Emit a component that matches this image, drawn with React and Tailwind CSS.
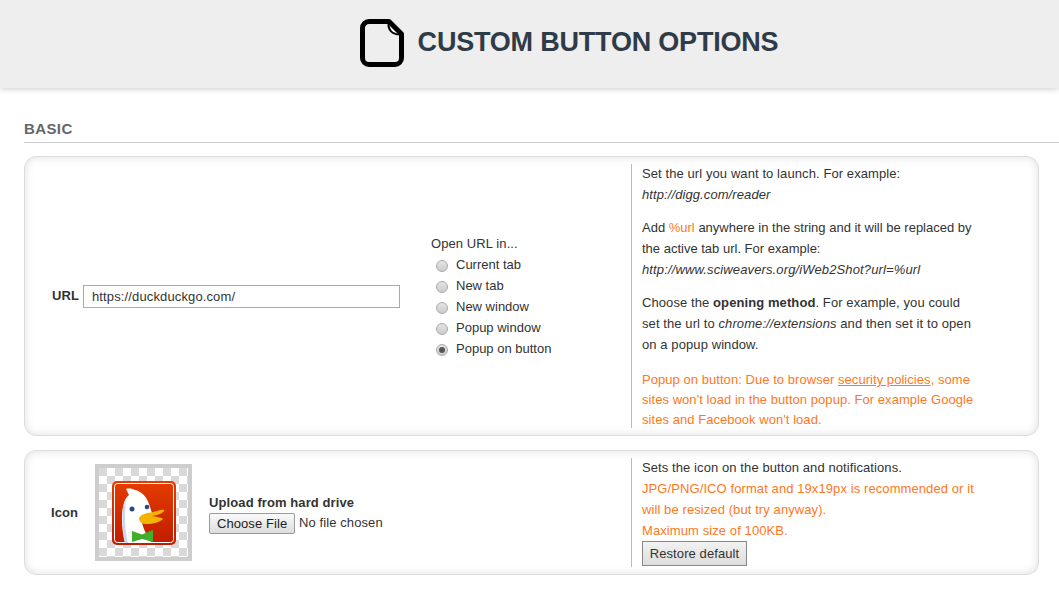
const openOptions = [
  { label: "Current tab" },
  { label: "New tab" },
  { label: "New window" },
  { label: "Popup window" },
  { label: "Popup on button", checked: true },
]

function PageIcon() {
  return (
    <svg width="44" height="48" viewBox="0 0 44 48" fill="none" className="shrink-0">
      <path d="M29 4L40 15C34 15 29 11 29 4Z" fill="#fff" />
      <path
        d="M9 2.5H29L41.5 15V39A6.5 6.5 0 0 1 35 45.5H9A6.5 6.5 0 0 1 2.5 39V9A6.5 6.5 0 0 1 9 2.5Z"
        stroke="#000"
        strokeWidth="5"
        strokeLinejoin="round"
      />
      <path d="M28.5 4C28 11 32 15.5 40 15.5" stroke="#000" strokeWidth="2" />
    </svg>
  )
}

function DuckIcon() {
  return (
    <svg width="97" height="97" viewBox="0 0 97 97" className="shrink-0">
      <defs>
        <pattern id="check" width="16" height="16" patternUnits="userSpaceOnUse" x="4" y="4">
          <rect width="16" height="16" fill="#fff" />
          <rect width="8" height="8" fill="#d9d9d9" />
          <rect x="8" y="8" width="8" height="8" fill="#d9d9d9" />
        </pattern>
        <linearGradient id="red" x1="0" y1="0" x2="0" y2="1">
          <stop offset="0" stopColor="#e63c00" />
          <stop offset="1" stopColor="#c01c00" />
        </linearGradient>
      </defs>
      <rect width="97" height="97" fill="#cdcdcd" />
      <rect x="4" y="4" width="89" height="89" fill="url(#check)" />
      <rect x="17" y="17" width="64" height="64" rx="5" fill="url(#red)" />
      <rect x="19.5" y="19.5" width="59" height="59" rx="3" fill="none" stroke="#fff" strokeWidth="1" />
      <path
        d="M30 79C27 68 26 52 28 43C29 37 31 33 34 31L31 25C35 24 38 25 40 26C46 27 52 33 54 40L57 49L47 58C48 64 52 73 57 79Z"
        fill="#fff"
      />
      <path d="M28 43C27 55 28 68 30 79H33C30 68 29 52 31 36Z" fill="#c9d8ef" />
      <path
        d="M44 54C46 50 52 49 58 48C63 47 67 45 69 46C70 48 64 51 57 52C61 53 66 53 68 55C65 58 58 60 52 60C47 60 44 58 44 54Z"
        fill="#f2b400"
      />
      <circle cx="37" cy="45" r="2.5" fill="#2a4a80" />
      <circle cx="52" cy="43" r="2.3" fill="#2a4a80" />
      <path d="M37 67L47 70.5L58 66V78L47 75L37 78Z" fill="#3fae2a" />
    </svg>
  )
}

export default function App() {
  return (
    <div className="min-h-[592px] bg-white font-['Liberation_Sans',Arial,sans-serif] text-[13px] tracking-[0.09px] text-[#333]">
      <header className="flex h-[88px] items-center justify-center gap-[14px] bg-[#eeeeee] pb-[3px] pl-[79px] shadow-[0_1px_6px_rgba(0,0,0,0.2)]">
        <PageIcon />
        <h1 className="text-[27px] font-bold tracking-[-0.2px] text-[#2f3b47]">CUSTOM BUTTON OPTIONS</h1>
      </header>

      <section className="pl-6 pt-[31px]">
        <h2 className="border-b border-[#cccccc] pb-[4px] text-[15px] leading-[19px] font-bold tracking-[0.4px] text-[#666666]">BASIC</h2>

        <div className="mr-5 mt-[13px] flex h-[280px] rounded-xl border border-[#dddddd] py-[7px] shadow-[inset_0_0_10px_rgba(0,0,0,0.13)]">
          <div className="flex w-[607px] items-center border-r border-[#bbbbbb]">
            <label className="ml-[27px] mr-[4px] font-bold">URL</label>
            <input
              readOnly
              value="https://duckduckgo.com/"
              className="mt-px h-[23px] w-[317px] border border-[#aaaaaa] px-2 text-[13px] tracking-[0.13px] text-[#333] outline-none"
            />
            <div className="ml-[31px] flex flex-col">
              <div className="leading-[21px]">Open URL in...</div>
              {openOptions.map((o) => (
                <div key={o.label} className="flex h-[21px] items-center pl-[5px] tracking-normal">
                  <span className="mr-2 mt-[2px] flex h-[12px] w-[12px] items-center justify-center rounded-full border border-[#aaaaaa] bg-gradient-to-b from-[#e4e4e4] to-[#cccccc]">
                    {o.checked && <span className="h-[6px] w-[6px] rounded-full bg-[#555555]" />}
                  </span>
                  <span>{o.label}</span>
                </div>
              ))}
            </div>
          </div>

          <div className="-mt-px w-[345px] pl-[10px] leading-[21px]">
            <p className="mb-[12px]">
              Set the url you want to launch. For example:<br />
              <i>http://digg.com/reader</i>
            </p>
            <p className="mb-[12px] tracking-normal">
              Add <span className="text-[#ff7722]">%url</span> anywhere in the string and it will be replaced by the active tab url. For example:<br />
              <i className="tracking-[0.13px]">http://www.sciweavers.org/iWeb2Shot?url=%url</i>
            </p>
            <p className="mb-[15px]">
              Choose the <b>opening method</b>. For example, you could set the url to <i>chrome://extensions</i> and then set it to open on a popup window.
            </p>
            <p className="leading-[20px] tracking-[0.05px] text-[#ff7722]">
              Popup on button: Due to browser <u>security policies</u>, some sites won't load in the button popup. For example Google sites and Facebook won't load.
            </p>
          </div>
        </div>

        <div className="mr-5 mt-[14px] flex h-[125px] rounded-xl border border-[#dddddd] py-[7px] shadow-[inset_0_0_10px_rgba(0,0,0,0.13)]">
          <div className="flex w-[607px] items-center border-r border-[#bbbbbb]">
            <label className="ml-[26px] mr-[17px] font-bold">Icon</label>
            <DuckIcon />
            <div className="ml-[17px] pt-[2px]">
              <div className="font-bold leading-[17px]">Upload from hard drive</div>
              <div className="mt-[2px] flex items-center">
                <button className="h-[21px] w-[86px] rounded-[2px] border border-[#999999] bg-gradient-to-b from-[#fafafa] to-[#dddddd] text-[13px] text-[#222]">Choose File</button>
                <span className="ml-1">No file chosen</span>
              </div>
            </div>
          </div>

          <div className="-mt-px w-[345px] pl-[10px] leading-[21px]">
            <div>Sets the icon on the button and notifications.</div>
            <div className="text-[#ff7722]">
              JPG/PNG/ICO format and 19x19px is recommended or it will be resized (but try anyway).<br />
              Maximum size of 100KB.
            </div>
            <button className="h-[25px] w-[105px] border border-[#888888] bg-gradient-to-b from-[#f2f2f2] to-[#dddddd] text-[13px] text-[#333]">Restore default</button>
          </div>
        </div>
      </section>
    </div>
  )
}
